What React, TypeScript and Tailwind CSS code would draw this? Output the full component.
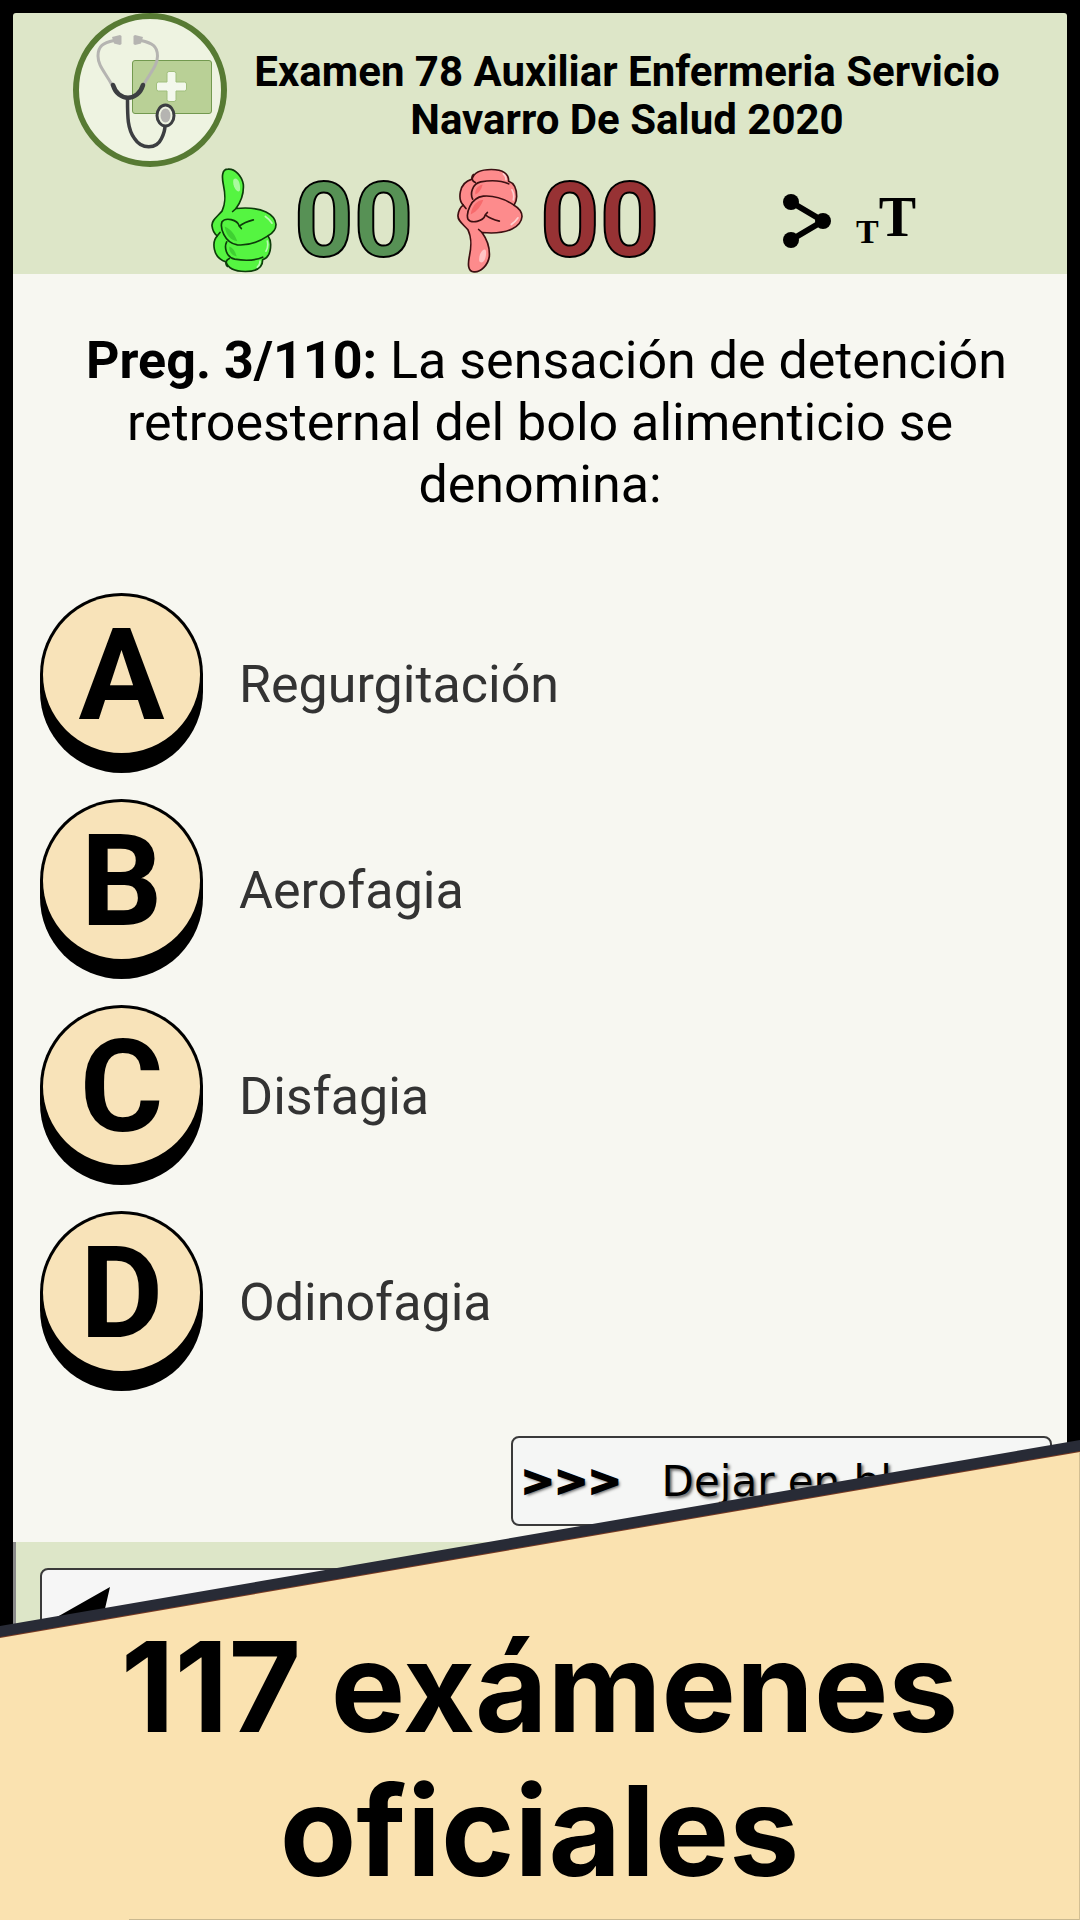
import { ReactNode } from "react";

interface IOption {
  letter: string;
  text: string;
}

interface IThumbProps {
  fill: string;
  shade: string;
  stroke: string;
  down?: boolean;
}

const options: IOption[] = [
  { letter: "A", text: "Regurgitación" },
  { letter: "B", text: "Aerofagia" },
  { letter: "C", text: "Disfagia" },
  { letter: "D", text: "Odinofagia" },
];

const Logo = () => (
  <svg viewBox="0 0 154 154" className="size-[154px] shrink-0" role="img" aria-label="Enfermería">
    <circle cx="77" cy="77" r="74" fill="#eef3e1" stroke="#577a33" strokeWidth="6" />
    <rect x="59.500" y="47.500" width="79" height="53" rx="2.500" fill="#b9d096" stroke="#73994f" />
    <path
      d="M96 58.500h5q2 0 2 2v8.500h8.500q2 0 2 2v5q0 2-2 2h-8.500v8.500q0 2-2 2h-5q-2 0-2-2v-8.500h-8.500q-2 0-2-2v-5q0-2 2-2h8.500v-8.500q0-2 2-2z"
      fill="#f3f8ec"
      stroke="#a0bf7c"
    />
    <g fill="none" strokeLinecap="round">
      <path d="M41 27.500C30 30 25 33 25 43c0 10 7 16 14 29" stroke="#b5b4b1" strokeWidth="3" />
      <path d="M68 27.500C79 30 84.500 33 84.500 43c0 10-7 16-14 29" stroke="#b5b4b1" strokeWidth="3" />
      <path d="M40 72c5 17 25 17 30 0" stroke="#3c3e41" strokeWidth="4.500" />
      <path d="M54.500 86c0 18 0 30 7 39.500c7 11 22 11 27 0c2.500-5 3.500-9 3.500-13" stroke="#3c3e41" strokeWidth="3.500" />
    </g>
    <path d="M39 24l8-2 1.500 1v8l-1.500 1-6-1.500zM70 24l-8-2-1.500 1v8l1.500 1 6-1.500z" fill="#b5b4b1" />
    <ellipse cx="92.500" cy="102.500" rx="8.500" ry="10.500" fill="#eef3e1" stroke="#3c3e41" strokeWidth="3" />
    <ellipse cx="92.500" cy="102.500" rx="5" ry="7" fill="#b5b4b1" />
  </svg>
);

const Thumb = ({ fill, shade, stroke, down }: IThumbProps) => (
  <svg viewBox="30 40 204 320" className="h-[107px] w-[68px] shrink-0" aria-hidden="true">
    <g transform={down ? "translate(0 400) scale(1 -1)" : undefined} strokeLinecap="round" strokeLinejoin="round">
      <path
        d="M84 46C64 46 66 72 70 92C78 130 76 150 66 172C50 190 34 200 36 216C38 232 46 242 52 246C36 262 36 312 78 324C84 346 110 353 136 353C172 353 188 342 188 318C206 312 212 290 212 272C212 262 208 252 204 246C218 238 228 228 228 212C226 184 190 156 108 164C124 142 132 120 130 92C126 66 104 44 84 46Z"
        fill={fill}
        stroke={stroke}
        strokeWidth="5"
      />
      <path d="M74 218C84 222 102 234 112 262C92 260 78 244 74 218ZM88 278C98 282 106 292 110 308C94 304 86 292 88 278Z" fill={shade} />
      <path d="M100 78C110 66 122 84 120 108C118 122 96 104 100 78Z" fill="#fff" opacity="0.5" />
      <path d="M202 262q4 16-4 30M180 322q0 12-8 18M196 188q12 8 20 20" fill="none" stroke="#fff" strokeWidth="5" opacity="0.6" />
      <path
        d="M108 164L98 173M118 217C112 196 76 190 66 204C60 220 72 268 112 273C150 276 186 258 204 246M118 217C132 206 144 202 160 198M118 217L124 224M80 264C72 280 78 310 104 316C140 322 170 318 188 310M52 246L60 236M88 314C78 318 74 330 82 338"
        fill="none"
        stroke={stroke}
        strokeWidth="5"
      />
    </g>
  </svg>
);

const Score = ({ children, className }: { children: ReactNode; className: string }) => (
  <span
    className={`w-[118px] shrink-0 text-center text-[104px] leading-[107px] font-bold [-webkit-text-stroke:2px_#000] ${className}`}
  >
    {children}
  </span>
);

const Header = () => (
  <header className="rounded-t-[3px] bg-[#dde6c8]">
    <div className="flex items-center pr-10 pl-[60px]">
      <Logo />
      <h1 className="flex-1 pt-3 text-center text-[42px] leading-[48px] font-bold">
        Examen 78 Auxiliar Enfermeria Servicio Navarro De Salud 2020
      </h1>
    </div>
    <div className="flex h-[107px] items-center gap-11 pl-[197px]">
      <div className="flex gap-4">
        <Thumb fill="#55f541" shade="#3fd032" stroke="#0e3d0b" />
        <Score className="text-[#579155]">00</Score>
      </div>
      <div className="flex gap-4">
        <Thumb fill="#fd8b8c" shade="#f76a6c" stroke="#3d1012" down />
        <Score className="text-[#973234]">00</Score>
      </div>
      <div className="ml-20 flex items-center gap-6">
        <button type="button" aria-label="Compartir">
          <svg viewBox="0 0 50 54" className="h-[54px] w-[50px]" aria-hidden="true">
            <path d="M9 8L41 27L9 46" fill="none" stroke="#000" strokeWidth="6" />
            <circle cx="9" cy="8" r="8" />
            <circle cx="41" cy="27" r="8" />
            <circle cx="9" cy="46" r="8" />
          </svg>
        </button>
        <button
          type="button"
          aria-label="Tamaño de letra"
          className="flex items-end pb-1 font-['Liberation_Serif',serif] font-bold"
        >
          <span className="text-[34px] leading-9">T</span>
          <span className="pb-1 text-[56px] leading-[58px]">T</span>
        </button>
      </div>
    </div>
  </header>
);

const OptionButton = ({ letter, text }: IOption) => (
  <button type="button" className="flex items-center gap-9 text-left">
    <span className="rounded-full bg-black px-[3px] pt-[3px] pb-5">
      <span className="flex size-[157px] items-center justify-center rounded-full bg-[#f8e3b9] text-[128px] font-bold">
        {letter}
      </span>
    </span>
    <span className="pt-1 text-[52px] text-[#333]">{text}</span>
  </button>
);

// slanted strip over the lower part of the screen
const Banner = () => (
  <section className="absolute inset-x-0 bottom-0 h-[480px]">
    <div className="h-full bg-[#282b36] [clip-path:polygon(0_186px,100%_0,100%_100%,0_100%)]">
      <div className="h-full bg-[#7a3a22] [clip-path:polygon(0_197px,100%_11px,100%_100%,0_100%)]">
        <div className="flex h-full flex-col justify-end border-r border-[#d3bf93] bg-[#fae2b0] [clip-path:polygon(0_198px,100%_12px,100%_100%,0_100%)]">
          <h2 className="px-16 pb-4 text-center font-['Inter',sans-serif] text-[125px] leading-[144px] font-bold">
            117 exámenes oficiales
          </h2>
          <div className="ml-[129px] h-px bg-[#c9b88f]" />
        </div>
      </div>
    </div>
  </section>
);

const App = () => {
  return (
    <div className="relative min-h-screen overflow-hidden bg-black px-[13px] pt-[13px] font-['Roboto',sans-serif] text-black">
      <Header />
      <main className="bg-[#f7f7f1] px-[27px] pt-14 pb-4">
        <p className="px-5 text-center text-[52px] leading-[62px]">
          <b>&nbsp;Preg. 3/110:</b> La sensación de detención retroesternal del bolo alimenticio se denomina:
        </p>
        <div className="mt-[77px] flex flex-col items-start gap-[26px]">
          {options.map((option) => (
            <OptionButton key={option.letter} {...option} />
          ))}
        </div>
        <div className="-mr-3 mt-[45px] flex justify-end">
          <button
            type="button"
            className="flex h-[90px] w-[541px] items-center gap-10 rounded-lg border-2 border-[#3a3a3a] bg-[#f5f6f5] px-2 font-['DejaVu_Sans',sans-serif] text-[42px] [text-shadow:2px_2px_3px_#666]"
          >
            <span className="text-[40px] font-bold [-webkit-text-stroke:2px_#000]">&gt;&gt;&gt;</span>
            <span>Dejar en blanco</span>
          </button>
        </div>
      </main>
      <footer className="border-l-[3px] border-[#8a8a8a] bg-[#dde6c8] px-6 py-[26px]">
        <button
          type="button"
          aria-label="Anterior"
          className="flex h-[90px] w-[500px] items-center rounded-lg border-2 border-[#3a3a3a] bg-[#f6f6f6] pl-2"
        >
          <svg viewBox="0 0 64 52" className="h-[52px] w-[64px]" aria-hidden="true">
            <path d="M0 34L60 0L54 26L60 52Z" />
          </svg>
        </button>
      </footer>
      <Banner />
    </div>
  );
};

export default App;
